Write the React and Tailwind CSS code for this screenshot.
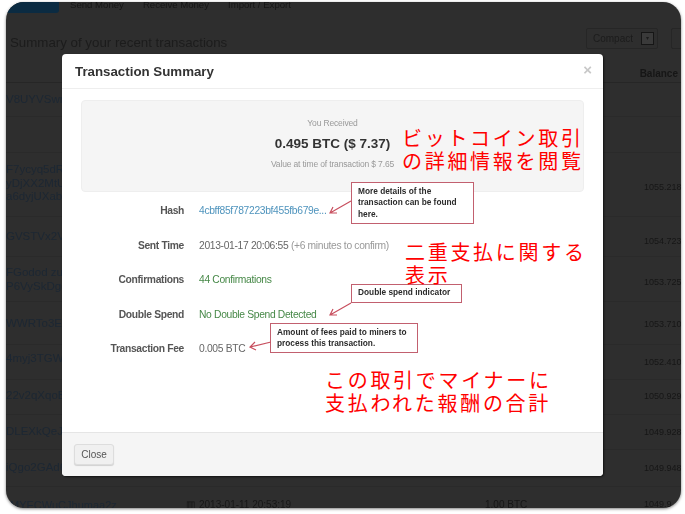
const rows = [
  { h: "h-[34px]", pl: "pt-[10px]", pr: "pt-[9px]", left: ["V8UYVSwro"], bal: "" },
  { h: "h-[36px]", pl: "pt-[9px]", pr: "pt-[9px]", left: [], bal: "" },
  { h: "h-[64px]", pl: "pt-[10px]", pr: "pt-[30px]", left: ["F7ycyq5dRH", "yDjXX2MtUz", "a6dyjUXabn"], bal: "1055.218" },
  { h: "h-[40px]", pl: "pt-[13px]", pr: "pt-[20px]", left: ["GVSTVx2VE"], bal: "1054.723" },
  { h: "h-[45px]", pl: "pt-[9px]", pr: "pt-[21px]", left: ["FGodod zuwC", "P6VySkDgg"], bal: "1053.725" },
  { h: "h-[43px]", pl: "pt-[15px]", pr: "pt-[18px]", left: ["WWRTo3EDo"], bal: "1053.710" },
  { h: "h-[35px]", pl: "pt-[7px]", pr: "pt-[13px]", left: ["4myj3TGW6"], bal: "1052.410" },
  { h: "h-[35px]", pl: "pt-[9px]", pr: "pt-[12px]", left: ["22v2qXqoBm"], bal: "1050.929" },
  { h: "h-[35px]", pl: "pt-[10px]", pr: "pt-[13px]", left: ["DLEXkQeJtt"], bal: "1049.928" },
  { h: "h-[37px]", pl: "pt-[11px]", pr: "pt-[14px]", left: ["iQgo2GAd6"], bal: "1049.948" },
]

const details = [
  { label: "Hash", value: <span className="text-[#4f94bd]">4cbff85f787223bf455fb679e...</span> },
  {
    label: "Sent Time",
    value: (
      <span className="text-[#666]">
        2013-01-17 20:06:55 <span className="text-[#999]">(+6 minutes to confirm)</span>
      </span>
    ),
  },
  { label: "Confirmations", value: <span className="text-[#468847]">44 Confirmations</span> },
  { label: "Double Spend", value: <span className="text-[#468847]">No Double Spend Detected</span> },
  { label: "Transaction Fee", value: <span className="text-[#666]">0.005 BTC</span> },
]

function Background() {
  return (
    <div className="w-[675px] h-[506px] rounded-[18px] bg-[#2e2e2e] overflow-hidden shadow-[0_1px_3px_rgba(0,0,0,0.5)] text-[9px] text-[#161616] blur-[0.3px]">
      <div className="flex items-start h-[15px] text-[9.6px] -mt-[4px]">
        <div className="w-[53px] h-[15px] rounded-b-[3px] bg-[#0b2b42] mr-[11px]"></div>
        <span className="mr-[19px]">Send Money</span>
        <span className="mr-[19px]">Receive Money</span>
        <span>Import / Export</span>
      </div>
      <div className="flex items-center justify-between h-[39px] pl-[4px] mt-[10px]">
        <span className="text-[13.3px] text-[#1c1c1c]">Summary of your recent transactions</span>
        <div className="flex items-center gap-[13px] -mr-[14px] -mt-[8px]">
          <div className="flex items-center justify-between w-[72px] h-[21px] border border-[#262626] rounded-[2px] pl-[6px] pr-[3px] text-[10px] text-[#1c1c1c]">
            Compact
            <span className="flex items-center justify-center w-[13px] h-[13px] border border-[#161616] bg-[#3a3a3a] text-[6px]">▾</span>
          </div>
          <div className="w-[24px] h-[21px] border border-[#262626] rounded-[2px]"></div>
        </div>
      </div>
      <div className="flex justify-end h-[21px] pr-[3px] pt-[7px] border-b border-[#262626] text-[10px] font-bold leading-none">
        Balance
      </div>
      {rows.map((row, index) => (
        <div key={index} className={`flex justify-between border-b border-[#2a2a2a] ${row.h}`}>
          <div className={`text-[11.5px] text-[#1c2733] leading-[13.5px] ${row.pl}`}>
            {row.left.map((line) => (
              <div key={line}>{line}</div>
            ))}
          </div>
          <div className={`w-[37px] leading-none whitespace-nowrap ${row.pr}`}>{row.bal}</div>
        </div>
      ))}
      <div className="flex pt-[13px] leading-none text-[10px]">
        <span className="w-[180px] pl-[4px] text-[#1c2733] text-[11px]">MYECWuCJhumaa2z</span>
        <span className="w-[299px] flex gap-[4px]">
          <span>▥</span>
          <span>2013-01-11 20:53:19</span>
        </span>
        <span className="w-[159px]">1.00 BTC</span>
        <span className="text-[9px]">1049.9</span>
      </div>
    </div>
  )
}

function Callout({ className, children }) {
  return (
    <div className={`absolute border-[1.5px] border-[#c2606f] bg-white px-[6px] font-bold text-[8.3px] leading-[11.4px] text-[#2b2b2b] ${className}`}>
      {children}
    </div>
  )
}

function Arrow({ className, width, height, d }) {
  return (
    <svg className={`absolute ${className}`} width={width} height={height} fill="none" stroke="#c8505f" strokeWidth="1.2">
      <path d={d} />
    </svg>
  )
}

function Modal() {
  return (
    <div className="absolute left-[62px] top-[54px] w-[541px] h-[422px] flex flex-col rounded-[4px] bg-white overflow-hidden shadow-[1px_1px_2px_rgba(0,0,0,0.6)] blur-[0.25px]">
      <div className="flex items-center justify-between h-[35px] pl-[13px] pr-[11px] border-b border-[#eee]">
        <span className="mt-[2px] text-[13.3px] font-bold text-[#333]">Transaction Summary</span>
        <span className="-mt-[3px] text-[15px] font-bold text-[#c8c8c8] leading-none">×</span>
      </div>
      <div className="flex-1 px-[19px] pt-[11px]">
        <div className="flex flex-col items-center h-[92px] pt-[17px] rounded-[4px] border border-[#eee] bg-[#f5f5f5]">
          <span className="text-[8.5px] tracking-[-0.15px] leading-[11px] text-[#999]">You Received</span>
          <span className="mt-[4px] text-[13.5px] leading-[22px] font-bold text-[#333]">0.495 BTC ($ 7.37)</span>
          <span className="mt-[4px] text-[8.5px] tracking-[-0.15px] leading-[11px] text-[#999]">Value at time of transaction $ 7.65</span>
        </div>
        <div className="mt-[2px] -ml-[19px]">
          {details.map((item) => (
            <div key={item.label} className="flex items-center h-[34.4px] text-[10.3px] tracking-[-0.33px]">
              <span className="w-[122px] text-right font-bold text-[#555]">{item.label}</span>
              <span className="ml-[15px]">{item.value}</span>
            </div>
          ))}
        </div>
      </div>
      <div className="h-[44px] flex items-center pl-[12px] border-t border-[#e5e5e5] bg-[#f5f5f5]">
        <button className="w-[40px] h-[21px] rounded-[3px] border border-[#ddd] bg-[#f0f0f0] text-[10px] text-[#555] shadow-[0_1px_1px_rgba(0,0,0,0.15)]">
          Close
        </button>
      </div>
      <Callout className="left-[289px] top-[128px] w-[123px] h-[42px] pt-[3px]">
        More details of the
        <br />
        transaction can be found
        <br />
        here.
      </Callout>
      <Callout className="left-[289px] top-[230px] w-[111px] h-[19px] pt-[2px]">Double spend indicator</Callout>
      <Callout className="left-[208px] top-[269px] w-[148px] h-[30px] pt-[3px]">
        Amount of fees paid to miners to
        <br />
        process this transaction.
      </Callout>
      <Arrow className="left-[266px] top-[146px]" width="24" height="16" d="M23 1 L2 13 M9 13 L2 13 L5 7" />
      <Arrow className="left-[266px] top-[248px]" width="24" height="16" d="M23 1 L2 13 M9 13 L2 13 L5 7" />
      <Arrow className="left-[186px] top-[285px]" width="24" height="12" d="M23 3 L2 8 M8 11 L2 8 L7 3" />
    </div>
  )
}

function Note({ className, children }) {
  return (
    <div className={`absolute text-[20px] leading-[22.5px] tracking-[2.7px] whitespace-nowrap text-[#f00] font-['Noto_Sans_CJK_JP',sans-serif] ${className}`}>
      {children}
    </div>
  )
}

export default function App() {
  return (
    <div className="relative w-[685px] h-[514px] bg-white pl-[6px] pt-[2px] overflow-hidden font-['Liberation_Sans',Arial,sans-serif]">
      <Background />
      <Modal />
      <Note className="left-[402px] top-[127px]">
        ビットコイン取引
        <br />
        の詳細情報を閲覧
      </Note>
      <Note className="left-[405px] top-[241px]">
        二重支払に関する
        <br />
        表示
      </Note>
      <Note className="left-[325px] top-[369px]">
        この取引でマイナーに
        <br />
        支払われた報酬の合計
      </Note>
    </div>
  )
}
